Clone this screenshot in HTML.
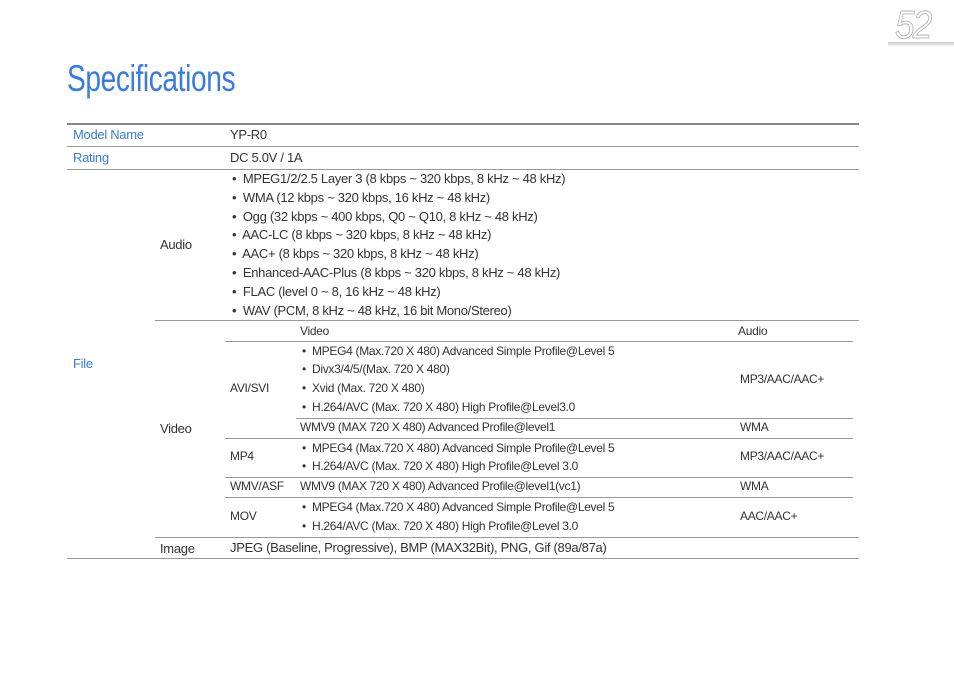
<!DOCTYPE html>
<html><head><meta charset="utf-8"><style>
body{margin:0;width:954px;height:674px;background:#fff;position:relative;overflow:hidden;font-family:"Liberation Sans",sans-serif;}
.t{position:absolute;font-size:13px;color:#333;white-space:nowrap;letter-spacing:-0.3px;line-height:15px}
.b{color:#3a7be0}
.l{position:absolute;height:1px;background:#999}
</style></head><body>
<div style="position:absolute;left:895px;top:4px;font-size:39px;font-style:italic;color:#fff;-webkit-text-stroke:0.8px #aaa;letter-spacing:-2px;transform:scaleX(0.9);transform-origin:left">52</div>
<div style="position:absolute;left:888px;top:42px;width:66px;height:4px;background:linear-gradient(to bottom,#ccc,#f4f4f4)"></div>
<div style="position:absolute;left:67px;top:58px;font-size:37px;color:#3a7be0;transform:scaleX(0.76);transform-origin:left;letter-spacing:-0.5px">Specifications</div>

<div class="l" style="left:67px;top:123px;width:792px;height:2px;background:#888"></div>
<div class="l" style="left:67px;top:146px;width:792px"></div>
<div class="l" style="left:67px;top:169px;width:792px"></div>
<div class="l" style="left:155px;top:320px;width:704px"></div>
<div class="l" style="left:225px;top:341px;width:628px"></div>
<div class="l" style="left:296px;top:418px;width:557px"></div>
<div class="l" style="left:225px;top:438px;width:628px"></div>
<div class="l" style="left:225px;top:477px;width:628px"></div>
<div class="l" style="left:225px;top:497px;width:628px"></div>
<div class="l" style="left:155px;top:537px;width:704px"></div>
<div class="l" style="left:67px;top:558px;width:792px"></div>

<div class="t b" style="left:73px;top:127px">Model Name</div>
<div class="t" style="left:230px;top:127px">YP-R0</div>
<div class="t b" style="left:73px;top:150px">Rating</div>
<div class="t" style="left:230px;top:150px">DC 5.0V / 1A</div>
<div class="t b" style="left:73px;top:356px">File</div>
<div class="t" style="left:160px;top:237px">Audio</div>
<div class="t" style="left:232px;top:171px">•&nbsp; MPEG1/2/2.5 Layer 3 (8 kbps ~ 320 kbps, 8 kHz ~ 48 kHz)</div>
<div class="t" style="left:232px;top:190px">•&nbsp; WMA (12 kbps ~ 320 kbps, 16 kHz ~ 48 kHz)</div>
<div class="t" style="left:232px;top:209px">•&nbsp; Ogg (32 kbps ~ 400 kbps, Q0 ~ Q10, 8 kHz ~ 48 kHz)</div>
<div class="t" style="left:232px;top:227px">•&nbsp; AAC-LC (8 kbps ~ 320 kbps, 8 kHz ~ 48 kHz)</div>
<div class="t" style="left:232px;top:246px">•&nbsp; AAC+ (8 kbps ~ 320 kbps, 8 kHz ~ 48 kHz)</div>
<div class="t" style="left:232px;top:265px">•&nbsp; Enhanced-AAC-Plus (8 kbps ~ 320 kbps, 8 kHz ~ 48 kHz)</div>
<div class="t" style="left:232px;top:284px">•&nbsp; FLAC (level 0 ~ 8, 16 kHz ~ 48 kHz)</div>
<div class="t" style="left:232px;top:303px">•&nbsp; WAV (PCM, 8 kHz ~ 48 kHz, 16 bit Mono/Stereo)</div>

<div class="t" style="left:160px;top:421px">Video</div>
<div class="t" style="left:300px;top:324px;font-size:12px">Video</div>
<div class="t" style="left:738px;top:324px;font-size:12px">Audio</div>
<div class="t" style="left:230px;top:381px;font-size:12px">AVI/SVI</div>
<div class="t" style="left:302px;top:344px;font-size:12px">•&nbsp; MPEG4 (Max.720 X 480) Advanced Simple Profile@Level 5</div>
<div class="t" style="left:302px;top:362px;font-size:12px">•&nbsp; Divx3/4/5/(Max. 720 X 480)</div>
<div class="t" style="left:302px;top:381px;font-size:12px">•&nbsp; Xvid (Max. 720 X 480)</div>
<div class="t" style="left:302px;top:400px;font-size:12px">•&nbsp; H.264/AVC (Max. 720 X 480) High Profile@Level3.0</div>
<div class="t" style="left:740px;top:372px;font-size:12px">MP3/AAC/AAC+</div>
<div class="t" style="left:300px;top:420px;font-size:12px">WMV9 (MAX 720 X 480) Advanced Profile@level1</div>
<div class="t" style="left:740px;top:420px;font-size:12px">WMA</div>
<div class="t" style="left:230px;top:449px;font-size:12px">MP4</div>
<div class="t" style="left:302px;top:441px;font-size:12px">•&nbsp; MPEG4 (Max.720 X 480) Advanced Simple Profile@Level 5</div>
<div class="t" style="left:302px;top:459px;font-size:12px">•&nbsp; H.264/AVC (Max. 720 X 480) High Profile@Level 3.0</div>
<div class="t" style="left:740px;top:449px;font-size:12px">MP3/AAC/AAC+</div>
<div class="t" style="left:230px;top:479px;font-size:12px">WMV/ASF</div>
<div class="t" style="left:300px;top:479px;font-size:12px">WMV9 (MAX 720 X 480) Advanced Profile@level1(vc1)</div>
<div class="t" style="left:740px;top:479px;font-size:12px">WMA</div>
<div class="t" style="left:230px;top:509px;font-size:12px">MOV</div>
<div class="t" style="left:302px;top:500px;font-size:12px">•&nbsp; MPEG4 (Max.720 X 480) Advanced Simple Profile@Level 5</div>
<div class="t" style="left:302px;top:519px;font-size:12px">•&nbsp; H.264/AVC (Max. 720 X 480) High Profile@Level 3.0</div>
<div class="t" style="left:740px;top:509px;font-size:12px">AAC/AAC+</div>
<div class="t" style="left:160px;top:541px">Image</div>
<div class="t" style="left:230px;top:540px">JPEG (Baseline, Progressive), BMP (MAX32Bit), PNG, Gif (89a/87a)</div>
</body></html>
